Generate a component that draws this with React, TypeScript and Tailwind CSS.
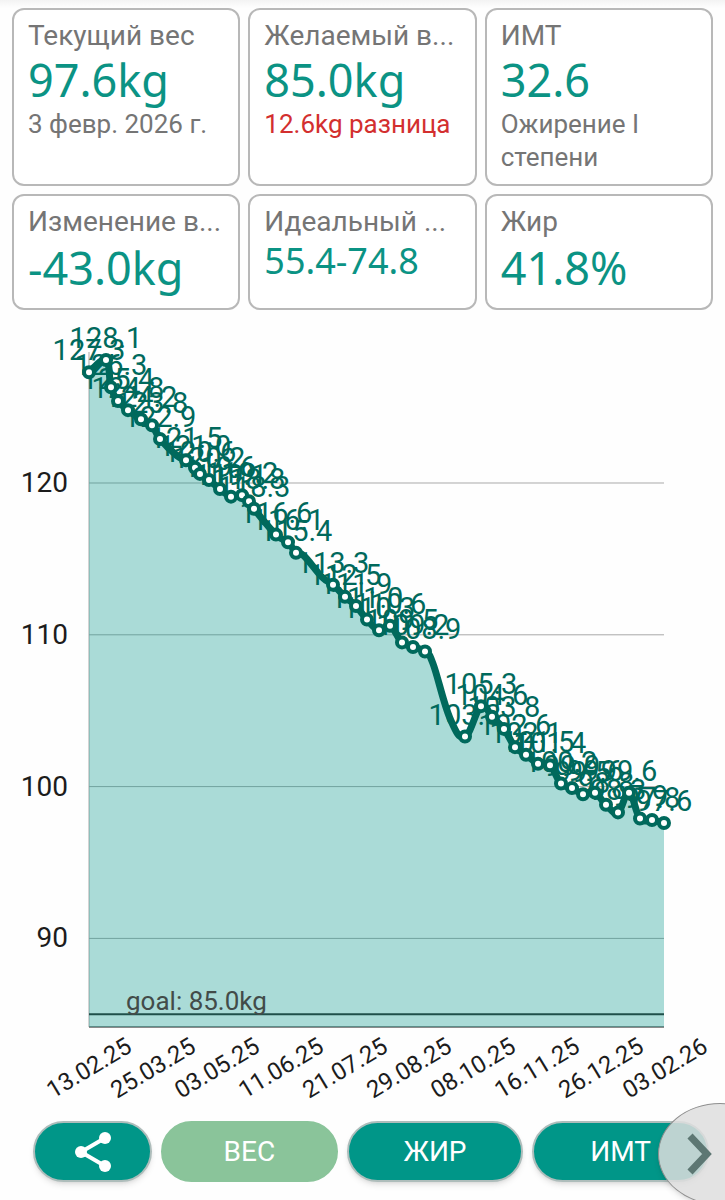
import { useState } from "react";
import clsx from "clsx";

type Stat = {
  label: string;
  value: string;
  note?: string;
  alert?: boolean;
  small?: boolean;
};

type Point = [number, number];

const SUMMARY: Stat[] = [
  { label: "Текущий вес", value: "97.6kg", note: "3 февр. 2026 г." },
  {
    label: "Желаемый в...",
    value: "85.0kg",
    note: "12.6kg разница",
    alert: true,
  },
  { label: "ИМТ", value: "32.6", note: "Ожирение I степени" },
  { label: "Изменение в...", value: "-43.0kg" },
  { label: "Идеальный ...", value: "55.4-74.8", small: true },
  { label: "Жир", value: "41.8%" },
];

// [x on the time axis, weight in kg]
const WEIGHTS: Point[] = [
  [89, 127.3],
  [106, 128.1],
  [111, 126.3],
  [118, 125.4],
  [128, 124.8],
  [141, 124.2],
  [152, 123.8],
  [160, 122.9],
  [186, 121.5],
  [195, 121.0],
  [200, 120.6],
  [209, 120.2],
  [220, 119.6],
  [231, 119.1],
  [242, 119.2],
  [249, 118.8],
  [254, 118.3],
  [276, 116.6],
  [288, 116.1],
  [296, 115.4],
  [333, 113.3],
  [345, 112.5],
  [356, 111.9],
  [367, 111.0],
  [379, 110.3],
  [390, 110.6],
  [402, 109.5],
  [413, 109.2],
  [425, 108.9],
  [465, 103.3],
  [481, 105.3],
  [492, 104.6],
  [504, 103.8],
  [515, 102.6],
  [526, 102.1],
  [538, 101.5],
  [550, 101.4],
  [561, 100.2],
  [572, 99.9],
  [583, 99.5],
  [595, 99.6],
  [606, 98.8],
  [618, 98.3],
  [629, 99.6],
  [640, 97.9],
  [652, 97.8],
  [664, 97.6],
];

// estimated weights for the longer gaps, they only bend the line
const ESTIMATES: Point[] = [
  [177, 121.8],
  [304, 115.2],
  [322, 113.8],
  [433, 108.1],
  [450, 104.5],
];

const DATES = [
  "13.02.25",
  "25.03.25",
  "03.05.25",
  "11.06.25",
  "21.07.25",
  "29.08.25",
  "08.10.25",
  "16.11.25",
  "26.12.25",
  "03.02.26",
];

const TABS = ["ВЕС", "ЖИР", "ИМТ"];
const GRID = [120, 110, 100, 90];

const LEFT = 89;
const RIGHT = 664;
const BOTTOM = 717;
const GOAL = 85;
const SMOOTHING = 0.2;

const toY = (kg: number) => 173 + (120 - kg) * 15.18;

function buildLine(points: Point[]) {
  const at = (i: number) =>
    points[Math.max(0, Math.min(points.length - 1, i))];
  let path = `M${points[0][0]} ${points[0][1]}`;

  for (let i = 1; i < points.length; i++) {
    const [before, prev, cur, next] = [at(i - 2), at(i - 1), at(i), at(i + 1)];
    const x1 = prev[0] + (cur[0] - before[0]) * SMOOTHING;
    const y1 = prev[1] + (cur[1] - before[1]) * SMOOTHING;
    const x2 = cur[0] - (next[0] - prev[0]) * SMOOTHING;
    const y2 = cur[1] - (next[1] - prev[1]) * SMOOTHING;
    path += `C${x1} ${y1} ${x2} ${y2} ${cur[0]} ${cur[1]}`;
  }

  return path;
}

const LINE = buildLine(
  [...WEIGHTS, ...ESTIMATES]
    .sort((a, b) => a[0] - b[0])
    .map(([x, kg]) => [x, toY(kg)]),
);

function StatCard({ label, value, note, alert, small }: Stat) {
  return (
    <article className="rounded-xl border-2 border-[#b8b8b8] bg-white px-[14px] pt-[9px] pb-[10px]">
      <h2 className="text-[28px] leading-[33px] whitespace-nowrap text-[#757575]">
        {label}
      </h2>
      <p
        className={clsx(
          "font-['Noto_Sans'] text-[#0b9384]",
          small ? "text-[36px] leading-[46px]" : "text-[45px]",
          !small && (note ? "leading-[56px]" : "leading-[60px]"),
        )}
      >
        {value}
      </p>
      {note && (
        <p
          className={clsx(
            "text-[26px] leading-[33px]",
            alert ? "whitespace-nowrap text-[#d32f2f]" : "text-[#757575]",
          )}
        >
          {note}
        </p>
      )}
    </article>
  );
}

function WeightChart() {
  return (
    <svg viewBox="0 0 725 793" className="block w-full" role="img">
      {GRID.map((kg) => (
        <line
          key={kg}
          x1={LEFT}
          x2={RIGHT}
          y1={toY(kg)}
          y2={toY(kg)}
          className="stroke-[#a9a9a9]"
        />
      ))}
      <line
        x1={LEFT}
        x2={LEFT}
        y1={42}
        y2={BOTTOM}
        className="stroke-[#a9a9a9]"
      />
      <line
        x1={LEFT}
        x2={RIGHT}
        y1={BOTTOM}
        y2={BOTTOM}
        className="stroke-[#8a8a8a] stroke-2"
      />
      <path
        d={`${LINE}L${RIGHT} ${BOTTOM}L${LEFT} ${BOTTOM}Z`}
        className="fill-[#009688]/33"
      />
      <path d={LINE} fill="none" className="stroke-[#00695c] stroke-[7px]" />

      {WEIGHTS.map(([x, kg]) => (
        <text
          key={x}
          x={x}
          y={toY(kg) - 12}
          textAnchor="middle"
          className="fill-[#00695c] text-[29px]"
        >
          {kg.toFixed(1)}
        </text>
      ))}
      {WEIGHTS.map(([x, kg]) => (
        <circle
          key={x}
          cx={x}
          cy={toY(kg)}
          r={5}
          className="fill-white stroke-[#00695c] stroke-4"
        />
      ))}

      <line
        x1={LEFT}
        x2={RIGHT}
        y1={toY(GOAL)}
        y2={toY(GOAL)}
        className="stroke-[#1f4f4a] stroke-2"
      />
      <text x={126} y={700} className="fill-[#424b49] text-[26px]">
        goal: 85.0kg
      </text>

      {GRID.map((kg) => (
        <text
          key={kg}
          x={68}
          y={toY(kg) + 9}
          textAnchor="end"
          className="fill-[#1c1c1c] text-[28px]"
        >
          {kg}
        </text>
      ))}
      {DATES.map((date, i) => (
        <text
          key={date}
          transform={`translate(${53 + i * 64} 789) rotate(-31)`}
          className="fill-[#1c1c1c] text-[24px]"
        >
          {date}
        </text>
      ))}
    </svg>
  );
}

function ShareIcon() {
  return (
    <svg viewBox="0 0 38 42" className="h-[42px] w-[38px]" aria-hidden="true">
      <path d="M31 7 7 21l24 14" fill="none" stroke="white" strokeWidth="4" />
      <circle cx="31" cy="7" r="6" fill="white" />
      <circle cx="7" cy="21" r="6" fill="white" />
      <circle cx="31" cy="35" r="6" fill="white" />
    </svg>
  );
}

function App() {
  const [tab, setTab] = useState("ВЕС");

  return (
    <main className="min-h-screen overflow-hidden bg-[#fefefe] font-[Roboto,sans-serif]">
      <section className="grid grid-cols-3 gap-2 bg-linear-to-b from-[#f3f3f3] to-[#fefefe] to-[8px] px-3 pt-2">
        {SUMMARY.map((stat) => (
          <StatCard key={stat.label} {...stat} />
        ))}
      </section>

      <WeightChart />

      <nav className="relative h-[97px] overflow-hidden pt-[18px]">
        <div className="flex gap-[9px] pr-4 pl-[33px]">
          <button
            type="button"
            aria-label="Поделиться"
            className="flex h-[61px] w-[119px] shrink-0 items-center justify-center rounded-full border-2 border-[#aebdbb] bg-[#009688] shadow-md"
          >
            <ShareIcon />
          </button>
          {TABS.map((name) => (
            <button
              key={name}
              type="button"
              onClick={() => setTab(name)}
              className={clsx(
                "h-[61px] flex-1 rounded-full border-2 text-[28px] text-white",
                tab === name
                  ? "border-[#8ac49a] bg-[#8ac49a]"
                  : "border-[#aebdbb] bg-[#009688] shadow-md",
              )}
            >
              {name}
            </button>
          ))}
        </div>
        <button
          type="button"
          aria-label="Дальше"
          className="absolute top-0 -right-[57px] flex h-[102px] w-[124px] items-center rounded-[50%] border border-[#8f8f8f] bg-[#dedede]/85 pl-[26px] shadow-md"
        >
          <svg
            viewBox="0 0 28 44"
            className="h-[44px] w-[28px]"
            aria-hidden="true"
          >
            <path
              d="m5 4 17 18L5 40"
              fill="none"
              stroke="#5d7773"
              strokeWidth="7"
            />
          </svg>
        </button>
      </nav>
    </main>
  );
}

export default App;
